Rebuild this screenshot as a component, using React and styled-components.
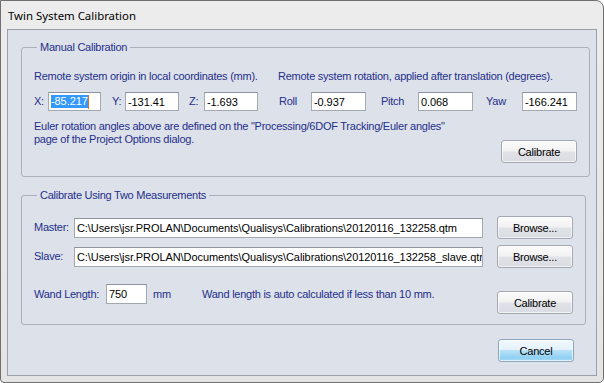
import React from "react";
import styled, { createGlobalStyle } from "styled-components";

const Global = createGlobalStyle`
  html, body { margin: 0; padding: 0; background: #ffffff; }
  body { font-family: "Liberation Sans", Arial, sans-serif; }
`;

const Window = styled.div`
  box-sizing: border-box;
  width: 604px;
  height: 383px;
  display: flex;
  flex-direction: column;
  background: linear-gradient(#ececec, #e4e4e4);
  border: 1px solid #6f6f6f;
  border-top-right-radius: 8px;
  border-bottom-right-radius: 5px;
  border-bottom-left-radius: 4px;
  overflow: hidden;
  padding: 0 6px 6px 6px;
`;

const TitleBar = styled.div`
  height: 28px;
  display: flex;
  align-items: center;
  padding-left: 1px;
  font-family: "Noto Sans", "Open Sans", sans-serif;
  font-size: 11.4px;
  color: #000;
  flex: none;
`;

const Client = styled.div`
  flex: 1;
  box-sizing: border-box;
  background: #dde1ea;
  border: 1px solid #9aa0ab;
  padding: 11px 10px 0 13px;
  display: flex;
  flex-direction: column;
  font-size: 11px;
  letter-spacing: -0.25px;
  color: #1f2f8a;
`;

const Group = styled.fieldset`
  margin: 0;
  border: 1px solid #a9b0bc;
  border-radius: 3px;
  padding: 0 12px 0 12px;
  height: ${(p) => p.$h}px;
  box-sizing: border-box;
  display: flex;
  flex-direction: column;
  margin-bottom: ${(p) => p.$mb || 0}px;
`;

const Legend = styled.legend`
  padding: 0 3px;
  margin-left: 3px;
  font-size: 11px;
  line-height: 13px;
  color: #1f2f8a;
`;

const Row = styled.div`
  display: flex;
  align-items: ${(p) => p.$align || "center"};
  height: ${(p) => p.$h || 20}px;
  margin-top: ${(p) => p.$mt || 0}px;
`;

const Label = styled.span`
  width: ${(p) => (p.$w ? p.$w + "px" : "auto")};
  margin-left: ${(p) => p.$ml || 0}px;
  line-height: ${(p) => p.$lh || 13}px;
  flex: none;
  white-space: nowrap;
`;

const Text = styled.div`
  line-height: 13px;
  white-space: nowrap;
  margin-top: ${(p) => p.$mt || 0}px;
`;

const TextBox = styled.div`
  box-sizing: border-box;
  width: ${(p) => p.$w}px;
  height: ${(p) => p.$h || 19}px;
  flex: none;
  background: #fff;
  border: 1px solid #a4a8b0;
  border-top-color: #8f949c;
  color: #000;
  font-size: 11px;
  letter-spacing: -0.08px;
  padding: 0 2px;
  display: flex;
  align-items: center;
  white-space: nowrap;
  overflow: hidden;
`;

const Selected = styled.span`
  background: #3399ff;
  color: #fff;
  line-height: 13px;
`;

const Caret = styled.span`
  display: inline-block;
  width: 1px;
  height: 14px;
  background: #d9731a;
`;

const Button = styled.button`
  box-sizing: border-box;
  width: 76px;
  height: 23px;
  flex: none;
  margin-left: auto;
  margin-top: ${(p) => p.$mt || 0}px;
  border: 1px solid ${(p) => (p.$default ? "#8fa4bd" : "#a3a8b1")};
  border-radius: 3px;
  padding: 0;
  font-family: "Liberation Sans", Arial, sans-serif;
  font-size: 11px;
  letter-spacing: -0.2px;
  color: #000;
  background: ${(p) =>
    p.$default
      ? "linear-gradient(#f3f9fd 0%, #e4f2fb 45%, #b9e2f8 50%, #8fd0f2 85%, #a9daf4 100%)"
      : "linear-gradient(#fbfbfb 0%, #f2f2f2 48%, #e0e2e7 52%, #d9dce2 100%)"};
  box-shadow: inset 0 0 0 1px rgba(255, 255, 255, 0.65);
`;

const Footer = styled.div`
  display: flex;
  margin-top: 14px;
  padding-right: 12px;
`;

export default function App() {
  return (
    <>
      <Global />
      <Window>
        <TitleBar>Twin System Calibration</TitleBar>
        <Client>
          <Group $h={136} $mb={12}>
            <Legend>Manual Calibration</Legend>
            <Row $h={13} $mt={16}>
              <Label $w={244}>Remote system origin in local coordinates (mm).</Label>
              <Label>Remote system rotation, applied after translation (degrees).</Label>
            </Row>
            <Row $h={19} $mt={9}>
              <Label $w={14}>X:</Label>
              <TextBox $w={53}>
                <Selected>-85.217</Selected>
                <Caret />
              </TextBox>
              <Label $w={13} $ml={11}>Y:</Label>
              <TextBox $w={54}>-131.41</TextBox>
              <Label $w={15} $ml={10}>Z:</Label>
              <TextBox $w={54}>-1.693</TextBox>
              <Label $w={32} $ml={21}>Roll</Label>
              <TextBox $w={55}>-0.937</TextBox>
              <Label $w={37} $ml={15}>Pitch</Label>
              <TextBox $w={55}>0.068</TextBox>
              <Label $w={36} $ml={13}>Yaw</Label>
              <TextBox $w={55}>-166.241</TextBox>
            </Row>
            <Text $mt={9}>
              Euler rotation angles above are defined on the "Processing/6DOF Tracking/Euler angles"
            </Text>
            <Text>page of the Project Options dialog.</Text>
            <Row $h={23} $mt={-6}>
              <Button>Calibrate</Button>
            </Row>
          </Group>
          <Group $h={136}>
            <Legend>Calibrate Using Two Measurements</Legend>
            <Row $h={23} $mt={14}>
              <Label $w={40}>Master:</Label>
              <TextBox $w={409} $h={20}>
                C:\Users\jsr.PROLAN\Documents\Qualisys\Calibrations\20120116_132258.qtm
              </TextBox>
              <Button>Browse...</Button>
            </Row>
            <Row $h={23} $mt={6}>
              <Label $w={40}>Slave:</Label>
              <TextBox $w={409} $h={20}>
                C:\Users\jsr.PROLAN\Documents\Qualisys\Calibrations\20120116_132258_slave.qtm
              </TextBox>
              <Button>Browse...</Button>
            </Row>
            <Row $h={30} $mt={16} $align="flex-start">
              <Label $w={72} $lh={20}>Wand Length:</Label>
              <TextBox $w={41} $h={20}>750</TextBox>
              <Label $w={49} $ml={6} $lh={20}>mm</Label>
              <Label $lh={20}>Wand length is auto calculated if less than 10 mm.</Label>
              <Button $mt={7}>Calibrate</Button>
            </Row>
          </Group>
          <Footer>
            <Button $default>Cancel</Button>
          </Footer>
        </Client>
      </Window>
    </>
  );
}
